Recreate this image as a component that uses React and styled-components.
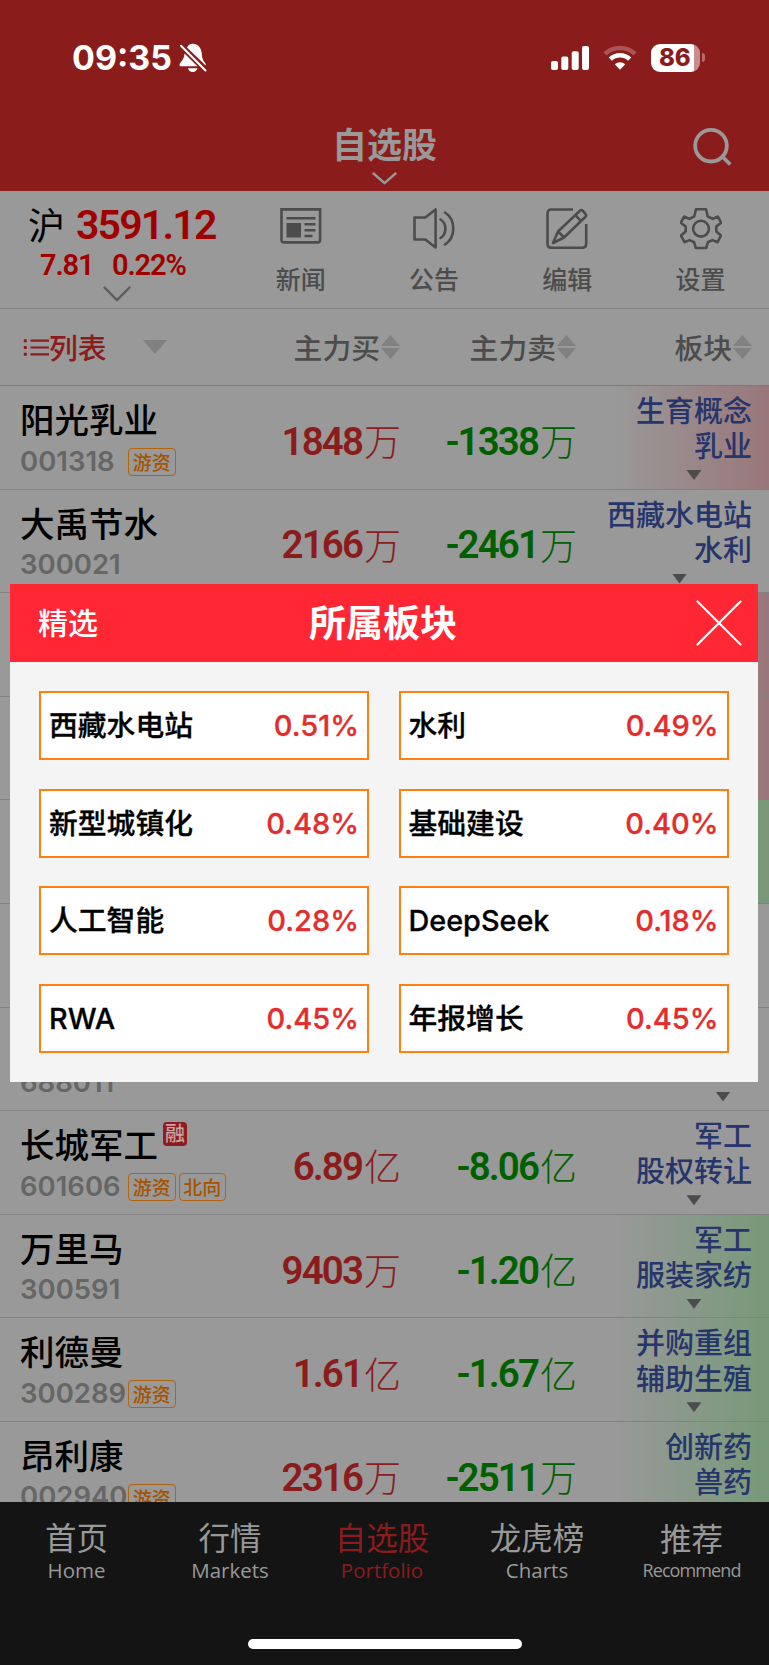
import React from 'react';
import styled, { createGlobalStyle } from 'styled-components';

const stocks = [
    { name: '阳光乳业', code: '001318', tags: ['游资'], buy: '1848', buyUnit: '万', sell: '-1338', sellUnit: '万', sectors: ['生育概念', '乳业'], tint: 'red' },
    { name: '大禹节水', code: '300021', tags: [], buy: '2166', buyUnit: '万', sell: '-2461', sellUnit: '万', sectors: ['西藏水电站', '水利'] },
    { tint: 'red' },
    { tint: 'red' },
    { tint: 'green' },
    {},
    { code: '688011', tags: [], sectors: [] },
    { name: '长城军工', code: '601606', margin: true, tags: ['游资', '北向'], buy: '6.89', buyUnit: '亿', sell: '-8.06', sellUnit: '亿', sectors: ['军工', '股权转让'] },
    { name: '万里马', code: '300591', tags: [], buy: '9403', buyUnit: '万', sell: '-1.20', sellUnit: '亿', sectors: ['军工', '服装家纺'], tint: 'green' },
    { name: '利德曼', code: '300289', tags: ['游资'], buy: '1.61', buyUnit: '亿', sell: '-1.67', sellUnit: '亿', sectors: ['并购重组', '辅助生殖'], tint: 'green' },
    { name: '昂利康', code: '002940', tags: ['游资'], buy: '2316', buyUnit: '万', sell: '-2511', sellUnit: '万', sectors: ['创新药', '兽药'], tint: 'green' },
];

const plates = [
    ['西藏水电站', '0.51%'],
    ['水利', '0.49%'],
    ['新型城镇化', '0.48%'],
    ['基础建设', '0.40%'],
    ['人工智能', '0.28%'],
    ['DeepSeek', '0.18%'],
    ['RWA', '0.45%'],
    ['年报增长', '0.45%'],
];

const navItems = [
    { zh: '首页', en: 'Home' },
    { zh: '行情', en: 'Markets' },
    { zh: '自选股', en: 'Portfolio', active: true },
    { zh: '龙虎榜', en: 'Charts' },
    { zh: '推荐', en: 'Recommend', small: true },
];

const BellOff = () => (
    <svg width="28" height="30" viewBox="0 0 28 30">
        <path fill="#fff" d="M8 4.5C9 2.500 11 .8 13.500 .8c5.500 0 8.800 4.200 9.300 9.700.3 4.500 1 6.500 3.200 9.200.7.900.9 1.700.6 2.800zM5.500 10.500 18.500 23.300H2.200C.6 23.300-.1 21.800.9 20.400c2.900-3.800 4.200-5 4.600-9.900zM9 25.200h9.500c-.6 2.300-2.500 3.700-4.800 3.700S9.500 27.500 9 25.200z" />
        <path stroke="#fff" strokeWidth="2" strokeLinecap="round" d="M2 2.800 26.500 27.500" />
    </svg>
);

const Signal = () => (
    <svg width="38" height="24" viewBox="0 0 38 24" fill="#fff">
        <rect x="0" y="15" width="7" height="9" rx="2" />
        <rect x="10.300" y="10.500" width="7" height="13.500" rx="2" />
        <rect x="20.700" y="5.300" width="7" height="18.700" rx="2" />
        <rect x="31" y="0" width="7" height="24" rx="2" />
    </svg>
);

const Wifi = () => (
    <svg width="34" height="25" viewBox="0 0 34 25">
        <path fill="none" stroke="#ab5454" strokeWidth="4.600" d="M2 8.800C10 1 24 1 32 8.800" />
        <path fill="none" stroke="#fff" strokeWidth="4.600" d="M7.300 14.200c5.400-5.300 14-5.300 19.400 0" />
        <path fill="#fff" d="M17 24.700 11.800 19.300c2.900-2.900 7.500-2.900 10.400 0z" />
    </svg>
);

const ChevronDown = ({ width, height, color, weight }) => (
    <svg width={width} height={height} viewBox={`0 0 ${width} ${height}`} fill="none">
        <path d={`M1.500 1.500 ${width / 2} ${height - 1.8} ${width - 1.5} 1.500`} stroke={color} strokeWidth={weight} strokeLinecap="round" strokeLinejoin="round" />
    </svg>
);

const SearchIcon = () => (
    <svg width="40" height="40" viewBox="0 0 40 40" fill="none" stroke="#999" strokeWidth="3.800">
        <circle cx="18" cy="18.700" r="15.800" />
        <path d="M29.800 30 37.300 37.500" />
    </svg>
);

const NewsIcon = () => (
    <svg width="42" height="42" viewBox="0 0 42 42" fill="none" stroke="#4c4c4c" strokeWidth="2.600">
        <path d="M1.500 1.400h38.600V32q0 2.400-2.400 2.400H3.900Q1.500 34.400 1.500 32z" />
        <path d="M6.500 10.300h29M24.500 16.200h11M24.500 22.200h11M24.500 28h8" />
        <rect x="6.500" y="15" width="14.500" height="14.500" fill="#4c4c4c" stroke="none" />
    </svg>
);

const SpeakerIcon = () => (
    <svg width="42" height="42" viewBox="0 0 42 42" fill="none" stroke="#4c4c4c" strokeWidth="2.600" strokeLinejoin="round" strokeLinecap="round">
        <path d="M1.500 9.500h10.800L22.600 1.500v38L12.300 31.500H1.500z" />
        <path d="M27.500 11.500c6.500 4 6.500 14.500 0 18.500M32 4.500c11 7 11 25 0 32" />
    </svg>
);

const EditIcon = () => (
    <svg width="42" height="42" viewBox="0 0 42 42" fill="none" stroke="#4c4c4c" strokeWidth="2.600" strokeLinejoin="round">
        <path d="M27 1.500H5.500q-4 0-4 4v30.200q0 4 4 4h30.700q4 0 4-4V16" />
        <path d="M7 35 12 23.500 34.200 2.500q1.300-1 2.500.2l3 3.600q.9 1.200-.2 2.400L18 29.500zM12 23.500l6.200 6M29.300 7.200l5.800 6" />
    </svg>
);

const GearIcon = () => (
    <svg width="42" height="42" viewBox="0 0 42 42" fill="none" stroke="#4c4c4c" strokeWidth="2.600" strokeLinejoin="round">
        <path d="M16 1.300h10l1.800 7.200 5 2.400 5-2.400 3.400 6.200-4.900 3.900v5l4.700 4-3.500 6.600-5-2.100-4.700 2.200L26.200 40H15.800l-1.600-5.700-4.700-2.200-5 2.100L1 27.600l4.700-4v-5L.8 14.700l3.400-6.200 5 2.400 5-2.400z" />
        <circle cx="21" cy="20.700" r="7.900" />
    </svg>
);

const ListIcon = () => (
    <svg width="27" height="17" viewBox="0 0 27 17" stroke="#8b1c1c" strokeWidth="2.200">
        <path d="M7.500 1.700H26M7.500 8.500H26M7.500 15.300H26" />
        <path strokeWidth="3" d="M.8 1.700h3M.8 8.500h3M.8 15.300h3" />
    </svg>
);

const SortIcon = () => (
    <svg width="19" height="24" viewBox="0 0 19 24" fill="#818181">
        <path d="M9.500 0 19 11H0zM9.500 24 19 13H0z" />
    </svg>
);

const CloseIcon = () => (
    <svg width="46" height="46" viewBox="0 0 46 46" stroke="#fff" strokeWidth="2.200" strokeLinecap="round">
        <path d="M1.500 1.500 44.500 44.500M44.500 1.500 1.500 44.500" />
    </svg>
);

const StockRow = ({ stock }) => (
    <Row>
        <NameCell>
            <StockName>
                {stock.name}
                {stock.margin && <MarginBadge>融</MarginBadge>}
            </StockName>
            <CodeLine>
                <Code>{stock.code}</Code>
                {stock.tags && stock.tags.map((tag) => <Tag key={tag}>{tag}</Tag>)}
            </CodeLine>
        </NameCell>
        <Amount $color="#8b1c1c">{stock.buy}<Unit>{stock.buyUnit}</Unit></Amount>
        <Amount $color="#006000">{stock.sell}<Unit>{stock.sellUnit}</Unit></Amount>
        <SectorCell $tint={stock.tint}>
            {stock.sectors && (
                <Sectors>
                    <SectorLines>
                        {stock.sectors.map((sector) => <div key={sector}>{sector}</div>)}
                    </SectorLines>
                    <Triangle $w={15} $h={10} $color="#4c4c4c" />
                </Sectors>
            )}
        </SectorCell>
    </Row>
);

const App = () => {
    return (
        <Screen>
            <GlobalStyle />
            <Header>
                <StatusBar>
                    <Clock>09:35</Clock>
                    <BellOff />
                    <StatusIcons>
                        <Signal />
                        <Wifi />
                        <BatteryWrap>
                            <Battery>86</Battery>
                            <BatteryTip />
                        </BatteryWrap>
                    </StatusIcons>
                </StatusBar>
                <TitleBar>
                    <TitleGroup>
                        <Title>自选股</Title>
                        <ChevronDown width={25} height={13} color="#999" weight={2.4} />
                    </TitleGroup>
                    <SearchButton><SearchIcon /></SearchButton>
                </TitleBar>
            </Header>

            <Toolbar>
                <IndexBox>
                    <IndexMain>
                        <IndexName>沪</IndexName>
                        <IndexValue>3591.12</IndexValue>
                    </IndexMain>
                    <IndexChange>
                        <ChangeValue $w={48}>7.81</ChangeValue>
                        <ChangeValue $w={74}>0.22%</ChangeValue>
                    </IndexChange>
                    <ChevronDown width={28} height={16} color="#5e5e5e" weight={2.4} />
                </IndexBox>
                <Tools>
                    <Tool><NewsIcon /><span>新闻</span></Tool>
                    <Tool><SpeakerIcon /><span>公告</span></Tool>
                    <Tool><EditIcon /><span>编辑</span></Tool>
                    <Tool><GearIcon /><span>设置</span></Tool>
                </Tools>
            </Toolbar>

            <Columns>
                <ListSwitch>
                    <ListIcon />
                    <span>列表</span>
                    <Triangle $w={24} $h={14} $color="#818181" />
                </ListSwitch>
                <Column>主力买<SortIcon /></Column>
                <Column>主力卖<SortIcon /></Column>
                <Column>板块<SortIcon /></Column>
            </Columns>

            <StockList>
                {stocks.map((stock, i) => <StockRow key={i} stock={stock} />)}
            </StockList>

            <Nav>
                <NavItems>
                    {navItems.map((item) => (
                        <NavItem key={item.en} $active={item.active}>
                            <NavZh $small={item.small}>{item.zh}</NavZh>
                            <NavEn $small={item.small}>{item.en}</NavEn>
                        </NavItem>
                    ))}
                </NavItems>
                <HomeIndicator />
            </Nav>

            <Modal>
                <ModalHeader>
                    <ModalSide>精选</ModalSide>
                    <ModalTitle>所属板块</ModalTitle>
                    <ModalClose><CloseIcon /></ModalClose>
                </ModalHeader>
                <PlateGrid>
                    {plates.map(([name, change]) => (
                        <Plate key={name}>
                            <PlateName>{name}</PlateName>
                            <PlateChange>{change}</PlateChange>
                        </Plate>
                    ))}
                </PlateGrid>
            </Modal>
        </Screen>
    );
};

export default App;

const GlobalStyle = createGlobalStyle`
    * {
        box-sizing: border-box;
    }
    body {
        margin: 0;
    }
    svg {
        display: block;
        flex: none;
    }
`
const Screen = styled.div`
    position: relative;
    width: 769px;
    height: 1665px;
    display: flex;
    flex-direction: column;
    overflow: hidden;
    background: #999;
    color: #000;
    font-family: "Noto Sans CJK SC", sans-serif;
    white-space: nowrap;
`
const Header = styled.div`
    height: 191px;
    flex: none;
    background: #8b1c1c;
`
const StatusBar = styled.div`
    height: 115px;
    padding: 0 64px 0 72px;
    display: flex;
    align-items: center;
`
const Clock = styled.div`
    width: 107px;
    font: 700 34px/40px Inter, sans-serif;
    color: #fff;
`
const StatusIcons = styled.div`
    margin-left: auto;
    display: flex;
    align-items: center;
    gap: 14px;
`
const BatteryWrap = styled.div`
    display: flex;
    align-items: center;
    gap: 2px;
`
const Battery = styled.div`
    width: 49px;
    height: 28px;
    padding-left: 8px;
    border-radius: 9px;
    background: linear-gradient(to right, #fff 43px, #c58d8d 43px);
    color: #8b1c1c;
    font: 800 24px/28px Inter, sans-serif;
    letter-spacing: -0.300px;
`
const BatteryTip = styled.div`
    width: 3px;
    height: 9px;
    border-radius: 0 4px 4px 0;
    background: #b56b6b;
`
const TitleBar = styled.div`
    height: 76px;
    display: grid;
    grid-template-columns: 1fr auto 1fr;
`
const TitleGroup = styled.div`
    grid-column: 2;
    display: flex;
    flex-direction: column;
    align-items: center;
`
const Title = styled.div`
    height: 57px;
    font-size: 35px;
    font-weight: 700;
    line-height: 56px;
    color: #999;
`
const SearchButton = styled.div`
    justify-self: end;
    padding: 12px 36px 0 0;
`
const Toolbar = styled.div`
    height: 118px;
    flex: none;
    display: flex;
    border-bottom: 1px solid #828282;
`
const IndexBox = styled.div`
    width: 234px;
    padding-top: 12px;
    display: flex;
    flex-direction: column;
    align-items: center;
    color: #a00000;
`
const IndexMain = styled.div`
    width: 100%;
    height: 45px;
    padding-left: 28px;
    display: flex;
    align-items: center;
`
const IndexName = styled.div`
    width: 48px;
    margin-top: -4px;
    font-size: 37px;
    line-height: 42px;
    color: #000;
`
const IndexValue = styled.div`
    font: 600 41px/45px Roboto, sans-serif;
    letter-spacing: -1.800px;
`
const IndexChange = styled.div`
    width: 100%;
    height: 38px;
    padding-left: 40px;
    display: flex;
    gap: 24px;
`
const ChangeValue = styled.div`
    width: ${({ $w }) => $w}px;
    font: 600 29px/34px Roboto, sans-serif;
    letter-spacing: -1.100px;
`
const Tools = styled.div`
    flex: 1;
    display: grid;
    grid-template-columns: repeat(4, 133.300px);
`
const Tool = styled.div`
    padding-top: 17px;
    display: flex;
    flex-direction: column;
    align-items: center;
    gap: 10px;
    color: #4c4c4c;
    font-size: 25px;
    font-weight: 500;
    line-height: 36px;
`
const Columns = styled.div`
    height: 77px;
    flex: none;
    display: grid;
    grid-template-columns: 224px 176px 176px 176px;
    align-items: center;
    border-bottom: 1px solid #7a7a7a;
    color: #4c4c4c;
    font-size: 28.800px;
    font-weight: 500;
    line-height: 40px;
`
const ListSwitch = styled.div`
    padding-left: 23px;
    display: flex;
    align-items: center;
    color: #8b1c1c;

    span {
        width: 94px;
        margin-left: -1px;
    }
`
const Column = styled.div`
    display: flex;
    align-items: center;
    justify-content: flex-end;
    gap: 1px;
`
const Triangle = styled.div`
    flex: none;
    width: ${({ $w }) => $w}px;
    height: ${({ $h }) => $h}px;
    background: ${({ $color }) => $color};
    clip-path: polygon(0 0, 100% 0, 50% 100%);
`
const StockList = styled.div`
    flex: 1;
    min-height: 0;
    overflow: hidden;
`
const Row = styled.div`
    height: 103.600px;
    display: grid;
    grid-template-columns: 240px 160px 176px 1fr;
    border-bottom: 1px solid #828282;
`
const NameCell = styled.div`
    padding: 8px 0 0 20px;
`
const StockName = styled.div`
    height: 51px;
    display: flex;
    font-size: 34.500px;
    font-weight: 500;
    line-height: 48px;
`
const MarginBadge = styled.div`
    width: 24px;
    height: 24px;
    margin: 3px 0 0 5px;
    border-radius: 4px;
    background: #8f1c20;
    color: #c9a5a5;
    font-size: 20px;
    line-height: 22px;
    text-align: center;
`
const CodeLine = styled.div`
    height: 34px;
    display: flex;
    align-items: center;
    gap: 3px;
`
const Code = styled.div`
    width: 105px;
    margin-top: -3px;
    font: 600 27.500px/32px Inter, sans-serif;
    color: #666;
`
const Tag = styled.div`
    width: 47.500px;
    height: 28px;
    border: 1px solid #b3640f;
    border-radius: 4px;
    color: #a65300;
    font-size: 19px;
    font-weight: 500;
    line-height: 25px;
    text-align: center;
`
const Amount = styled.div`
    display: flex;
    align-items: center;
    justify-content: flex-end;
    padding-top: 9px;
    color: ${({ $color }) => $color};
    font: 600 38.500px/44px Roboto, sans-serif;
    letter-spacing: -1.900px;
`
const Unit = styled.span`
    margin: -3px -1px 0 2px;
    font: 300 37px/44px "Noto Sans CJK SC", sans-serif;
    letter-spacing: 0;
`
const tints = { red: '#99777a', green: '#789979' };

const SectorCell = styled.div`
    padding: 6px 17px 0 0;
    display: flex;
    justify-content: flex-end;
    align-items: flex-start;
    background: ${({ $tint }) => ($tint ? `linear-gradient(to right, #999 38px, ${tints[$tint]})` : 'none')};
`
const Sectors = styled.div`
    min-width: 58px;
    display: flex;
    flex-direction: column;
    align-items: center;
`
const SectorLines = styled.div`
    height: 78px;
    align-self: stretch;
    color: #26356b;
    font-size: 29px;
    font-weight: 500;
    line-height: 35.200px;
    text-align: right;
`
const Nav = styled.div`
    height: 163px;
    flex: none;
    display: flex;
    flex-direction: column;
    align-items: center;
    background: #141414;
`
const NavItems = styled.div`
    width: 100%;
    height: 137px;
    padding-top: 11px;
    display: grid;
    grid-template-columns: 153px 154px 150px 160px 149px;
`
const NavItem = styled.div`
    display: flex;
    flex-direction: column;
    align-items: center;
    color: ${({ $active }) => ($active ? '#8b1c1c' : '#999')};
`
const NavZh = styled.div`
    height: 46px;
    font-size: 31.500px;
    line-height: ${({ $small }) => ($small ? 48 : 46)}px;
`
const NavEn = styled.div`
    font: 400 ${({ $small }) => ($small ? 18 : 20.5)}px/22px "Open Sans", sans-serif;
    letter-spacing: ${({ $small }) => ($small ? -0.9 : 0)}px;
`
const HomeIndicator = styled.div`
    width: 274px;
    height: 10px;
    border-radius: 5px;
    background: #fff;
`
const Modal = styled.div`
    position: absolute;
    left: 10px;
    top: 584px;
    width: 748px;
    height: 498px;
    background: #f4f4f4;
`
const ModalHeader = styled.div`
    height: 78px;
    padding: 0 16px 0 28px;
    display: grid;
    grid-template-columns: 1fr auto 1fr;
    align-items: center;
    background: #ff2733;
    color: #fff;
`
const ModalSide = styled.div`
    margin-top: -4px;
    font-size: 30px;
    font-weight: 500;
    line-height: 40px;
`
const ModalTitle = styled.div`
    margin-top: -4px;
    padding-right: 14px;
    font-size: 37px;
    font-weight: 700;
    line-height: 50px;
`
const ModalClose = styled.div`
    justify-self: end;
`
const PlateGrid = styled.div`
    padding: 29px;
    display: grid;
    grid-template-columns: repeat(2, 330px);
    grid-auto-rows: 69px;
    gap: 28.700px 29.500px;
`
const Plate = styled.div`
    padding: 1px 8px 0 8px;
    display: flex;
    align-items: center;
    justify-content: space-between;
    border: 2px solid #ff800f;
    background: #fff;
`
const PlateName = styled.div`
    font: 500 28.800px/40px Inter, "Noto Sans CJK SC", sans-serif;
    -webkit-text-stroke: 0.300px #000;
`
const PlateChange = styled.div`
    font: 500 29px/40px Inter, sans-serif;
    -webkit-text-stroke: 0.300px #e32d2d;
    color: #e32d2d;
`
